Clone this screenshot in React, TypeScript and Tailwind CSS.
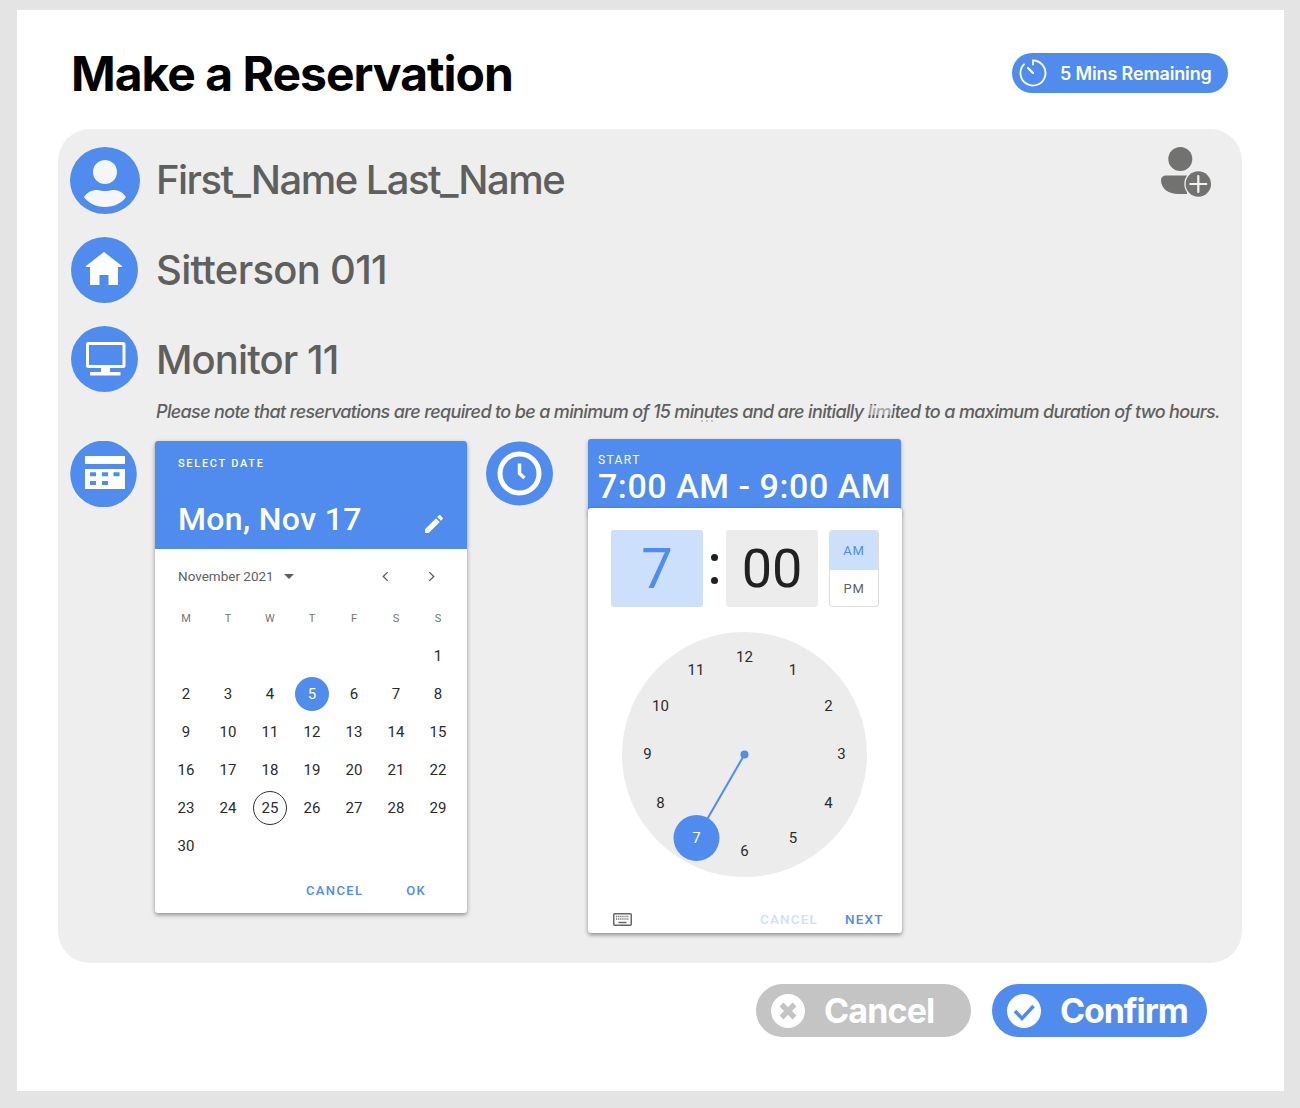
import React from "react";

const BLUE = "#4f8cee";
const dial = [
  ["12", 0], ["1", 30], ["2", 60], ["3", 90], ["4", 120], ["5", 150], ["6", 180], ["8", 240], ["9", 270], ["10", 300], ["11", 330],
] as [string, number][];

const weeks = [
  ["", "", "", "", "", "", "1"],
  ["2", "3", "4", "5", "6", "7", "8"],
  ["9", "10", "11", "12", "13", "14", "15"],
  ["16", "17", "18", "19", "20", "21", "22"],
  ["23", "24", "25", "26", "27", "28", "29"],
  ["30", "", "", "", "", "", ""],
];

function InfoRow({ icon, label, className, textClass }: { icon: React.ReactNode; label: string; className: string; textClass: string }) {
  return (
    <div className={`flex items-center ${className}`}>
      <div className="w-[86px] shrink-0">{icon}</div>
      <div className={`text-[40px] font-[550] leading-none text-[#5f5f5d] ${textClass}`}>{label}</div>
    </div>
  );
}

function Calendar() {
  return (
    <div className="w-[312px] h-[472px] rounded-[3px] bg-white shadow-[0_2px_4px_rgba(0,0,0,0.4)] font-['Roboto',sans-serif] overflow-hidden">
      <div className="h-[108px] bg-[#4f8cee] px-[23px] pt-[16px] text-white">
        <div className="text-[11px] font-medium leading-[14px] tracking-[1.7px]">SELECT DATE</div>
        <div className="mt-[28px] flex items-center justify-between">
          <div className="text-[32px] font-medium leading-[40px] tracking-[0.35px]">Mon, Nov 17</div>
          <svg viewBox="0 0 24 24" className="w-[24px] h-[24px] mr-[-2px] mt-[9px]" fill="#fff">
            <path d="M3 17.25V21h3.75L17.81 9.94l-3.75-3.75L3 17.25zM20.71 7.04c.39-.39.39-1.02 0-1.41l-2.34-2.34c-.39-.39-1.02-.39-1.41 0l-1.83 1.83 3.75 3.75 1.83-1.83z" />
          </svg>
        </div>
      </div>
      <div className="flex h-[54px] items-center pl-[23px] pr-[32px] text-[#5f5f5f]">
        <span className="pt-[1px] text-[13.5px] leading-none">November 2021</span>
        <svg viewBox="0 0 10 5" className="ml-[10px] w-[10px] h-[5px]" fill="#5f5f5f"><path d="M0 0h10L5 5z" /></svg>
        <svg viewBox="0 0 8 12" className="ml-auto w-[7px] h-[11px]" fill="none" stroke="#5f5f5f" strokeWidth="1.6"><path d="M6.5 1 1.5 6l5 5" /></svg>
        <svg viewBox="0 0 8 12" className="ml-[39px] w-[7px] h-[11px]" fill="none" stroke="#5f5f5f" strokeWidth="1.6"><path d="m1.5 1 5 5-5 5" /></svg>
      </div>
      <div className="px-[10px]">
        <div className="mt-[1px] grid grid-cols-[repeat(7,42px)] h-[30px] items-center text-center text-[11px] text-[#757575]">
          {["M", "T", "W", "T", "F", "S", "S"].map((d, i) => <div key={i}>{d}</div>)}
        </div>
        <div className="mt-[3px] grid grid-cols-[repeat(7,42px)] auto-rows-[38px] items-center justify-items-center text-[15px] text-[#2b2b2b]">
          {weeks.flat().map((d, i) => (
            <div
              key={i}
              className={`flex h-[34px] w-[34px] items-center justify-center rounded-full ${d === "5" ? "bg-[#4f8cee] text-white" : d === "25" ? "border border-[#333]" : ""}`}
            >
              {d}
            </div>
          ))}
        </div>
      </div>
      <div className="mt-[16px] flex items-center pl-[151px] text-[13px] font-medium tracking-[1.35px] text-[#4f8cee]">
        <span>CANCEL</span>
        <span className="ml-[43px]">OK</span>
      </div>
    </div>
  );
}

function TimePicker() {
  return (
    <div className="w-[314px] font-['Roboto',sans-serif]">
      <div className="h-[75px] w-[313px] rounded-t-[3px] bg-[#4f8cee] pl-[10px] pt-[14px] text-white shadow-[0_2px_4px_rgba(0,0,0,0.3)]">
        <div className="text-[12px] leading-[14px] tracking-[1.4px]">START</div>
        <div className="mt-[-1px] text-[34px] font-medium leading-[40px] tracking-[0.55px] whitespace-nowrap">7:00 AM - 9:00 AM</div>
      </div>
      <div className="relative mt-[-6px] h-[425px] rounded-[3px] bg-white shadow-[0_2px_4px_rgba(0,0,0,0.4)]">
        <div className="flex items-start pl-[23px] pt-[22px]">
          <div className="flex h-[77px] w-[92px] items-center justify-center rounded-[3px] bg-[#cce0fb] text-[56px] leading-none text-[#4f8cee]">7</div>
          <div className="flex h-[77px] w-[23px] flex-col items-center justify-center gap-[16px]">
            <span className="h-[7px] w-[7px] rounded-full bg-[#212121]" />
            <span className="h-[7px] w-[7px] rounded-full bg-[#212121]" />
          </div>
          <div className="flex h-[77px] w-[92px] items-center justify-center rounded-[3px] bg-[#ececec] text-[54px] leading-none text-[#212121]">00</div>
          <div className="ml-[11px] h-[77px] w-[50px] overflow-hidden rounded-[3px] border border-[#dddddd] text-[13px] tracking-[0.8px]">
            <div className="flex h-[38px] items-center justify-center bg-[#cce0fb] pt-[1px] text-[#4f8cee]">AM</div>
            <div className="flex h-[38px] items-center justify-center border-t border-[#dddddd] text-[#5f5f5f]">PM</div>
          </div>
        </div>
        <div className="relative ml-[34px] mt-[25px] h-[245px] w-[245px] rounded-full bg-[#ececec] text-[15px] text-[#2b2b2b]">
          {dial.map(([n, a]) => (
            <span
              key={n}
              className="absolute flex h-[20px] w-[20px] items-center justify-center"
              style={{
                left: 122.5 + 97 * Math.sin((a * Math.PI) / 180) - 10,
                top: 122.5 - 97 * Math.cos((a * Math.PI) / 180) - 10,
              }}
            >
              {n}
            </span>
          ))}
          <svg viewBox="0 0 245 245" className="absolute inset-0 h-full w-full">
            <line x1="122.5" y1="122.5" x2="74" y2="206.5" stroke="#4f8cee" strokeWidth="2" />
            <circle cx="122.5" cy="122.5" r="4" fill="#4f8cee" />
            <circle cx="74.5" cy="206" r="23" fill="#4f8cee" />
          </svg>
          <span className="absolute left-[64.5px] top-[196px] flex h-[20px] w-[20px] items-center justify-center text-white">7</span>
        </div>
        <div className="mt-[32px] flex h-[20px] items-center pl-[25px] text-[13.5px] font-medium tracking-[1.15px]">
          <svg viewBox="0 0 19 13" className="h-[13px] w-[19px]">
            <rect x="0.75" y="0.75" width="17.5" height="11.5" rx="1" fill="#fff" stroke="#666" strokeWidth="1.5" />
            <path d="M3 3.5h13M3 6h13" stroke="#777" strokeWidth="1.3" strokeDasharray="1.3 0.8" />
            <path d="M5.5 9.5h8" stroke="#666" strokeWidth="1.5" />
          </svg>
          <span className="ml-[128px] text-[#cce0fb]">CANCEL</span>
          <span className="ml-[27px] text-[#4f8cee]">NEXT</span>
        </div>
      </div>
    </div>
  );
}

export default function App() {
  return (
    <div className="h-[1108px] w-[1300px] overflow-hidden bg-[#e4e4e4] pl-[17px] pt-[10px] font-['Inter',sans-serif]">
      <div className="h-[1081px] w-[1267px] bg-white">
        <div className="flex h-[119px] items-center justify-between pl-[55px] pr-[56px] pt-[7px]">
          <h1 className="mt-[2px] ml-[-1px] text-[48px] font-bold leading-none tracking-[-1px] text-black">Make a Reservation</h1>
          <div className="flex h-[40px] w-[216px] items-center rounded-full bg-[#4f8cee] pl-[7px] text-white">
            <svg viewBox="1019 59 28 28" className="h-[28px] w-[28px]" fill="none" stroke="#fff" strokeWidth="1.8" strokeLinecap="round">
              <path d="M1033 60.5a12.5 12.5 0 1 1-9 3.8" />
              <path d="m1033 73-5-5" strokeWidth="2.2" />
              <path d="M1033 60.5v4" />
            </svg>
            <span className="ml-[13px] pt-[1px] text-[18px] font-semibold leading-none tracking-[-0.15px] whitespace-nowrap">5 Mins Remaining</span>
          </div>
        </div>

        <div className="relative ml-[41px] h-[834px] w-[1184px] rounded-[32px] bg-[#eeeeee] pl-[12px] pt-[18px]">
          <svg viewBox="1158 145 56 52" className="absolute left-[1100px] top-[16px] h-[52px] w-[56px]">
            <circle cx="1180.3" cy="159" r="12" fill="#727270" />
            <path d="M1161 180c0-3 2-4.5 5-4.5h21v18.5h-9c-9 0-17-5-17-14z" fill="#727270" />
            <circle cx="1198.3" cy="184" r="14" fill="#eeeeee" />
            <circle cx="1198.3" cy="184" r="12.7" fill="#727270" />
            <path d="M1198.3 176v16M1190.3 184h16" stroke="#f3f3f3" strokeWidth="2.2" strokeLinecap="round" />
          </svg>

          <InfoRow
            className="h-[67px]"
            textClass="pb-[2px] tracking-[-1.55px]"
            label="First_Name Last_Name"
            icon={
              <svg viewBox="70 147 70 67" className="h-[67px] w-[70px]">
                <ellipse cx="105" cy="180.5" rx="35" ry="33.5" fill={BLUE} />
                <circle cx="105" cy="172" r="12" fill="#f4f6fa" />
                <path d="M84 197c3-5 9-7.500 14-7 4 1.300 10 1.300 14 0 5-.5 11 2 14 7-4 6-12 10-21 10s-17-4-21-10z" fill="#f4f6fa" />
              </svg>
            }
          />
          <InfoRow
            className="mt-[23px] h-[66px]"
            textClass="tracking-[-0.7px]"
            label="Sitterson 011"
            icon={
              <svg viewBox="71 237 67 66" className="ml-[1px] h-[66px] w-[67px]">
                <ellipse cx="104.500" cy="270" rx="33.500" ry="33" fill={BLUE} />
                <path d="M104 252l18 14v1h-4v18h-9.500v-10h-9v10H90v-18h-4v-1z" fill="#fff" />
              </svg>
            }
          />
          <InfoRow
            className="mt-[23px] h-[66px]"
            textClass="pt-[2px] tracking-[-0.9px]"
            label="Monitor 11"
            icon={
              <svg viewBox="71 326 67 66" className="ml-[1px] h-[66px] w-[67px]">
                <ellipse cx="104.500" cy="359" rx="33.500" ry="33" fill={BLUE} />
                <rect x="87.500" y="343.500" width="36.500" height="23" rx="1" fill="none" stroke="#fff" strokeWidth="3" />
                <path d="M101 368h9v4h10.500v3.500H90V372h11z" fill="#fff" />
              </svg>
            }
          />

          <div className="relative mt-[8px] h-[24px] pl-[86px] text-[18px] font-medium italic leading-[24px] tracking-[-0.645px] text-[#5f5f5d] whitespace-nowrap">
            Please note that reservations are required to be a minimum of 15 minutes and are initially limited to a maximum duration of two hours.
            <span className="absolute left-[631px] top-[20px] h-[2px] w-[2px] rounded-full bg-[#b5b5b5]" />
            <span className="absolute left-[636px] top-[20px] h-[2px] w-[2px] rounded-full bg-[#b5b5b5]" />
            <span className="absolute left-[641px] top-[20px] h-[2px] w-[2px] rounded-full bg-[#b5b5b5]" />
            <span className="absolute left-[795px] top-[5px] h-[10px] w-[28px] bg-[#eeeeee]/50" />
          </div>

          <div className="mt-[15px] flex items-start">
            <svg viewBox="70 441 67 66" className="mt-[2px] h-[66px] w-[67px] shrink-0">
              <circle cx="103.500" cy="474" r="33.300" fill={BLUE} />
              <rect x="85" y="456" width="40" height="8" fill="#fff" />
              <path d="M85 469h40v20H85zM90 472.300v4h6v-4zM102 472.300v4h6v-4zM113.500 472.300v4h6v-4zM90 481v4h6v-4zM102 481v4h6v-4z" fill="#fff" fillRule="evenodd" />
            </svg>
            <div className="ml-[18px] mt-[2px]"><Calendar /></div>
            <svg viewBox="486 441 67 66" className="ml-[19px] mt-[2px] h-[66px] w-[67px] shrink-0">
              <ellipse cx="519.500" cy="473.500" rx="33.500" ry="32" fill={BLUE} />
              <circle cx="519.500" cy="473.500" r="19.500" fill="none" stroke="#fff" strokeWidth="5" />
              <path d="M519.500 463.500v10l5 4.500" fill="none" stroke="#fff" strokeWidth="3.500" />
            </svg>
            <div className="ml-[35px]"><TimePicker /></div>
          </div>
        </div>

        <div className="flex pl-[739px] pt-[21px]">
          <div className="flex h-[53px] w-[215px] items-center rounded-full bg-[#c4c4c4] pl-[15px] text-white">
            <svg viewBox="771 993 34 34" className="h-[34px] w-[34px]">
              <circle cx="788" cy="1010" r="17" fill="#fff" />
              <path d="M781.500 1003.500 794.500 1016.500M794.500 1003.500 781.500 1016.500" stroke="#c4c4c4" strokeWidth="5.500" />
            </svg>
            <span className="ml-[19px] text-[34px] font-bold leading-none tracking-[-0.85px]">Cancel</span>
          </div>
          <div className="ml-[21px] flex h-[53px] w-[215px] items-center rounded-full bg-[#4f8cee] pl-[15px] text-white">
            <svg viewBox="1007 993 34 34" className="h-[34px] w-[34px]">
              <circle cx="1024" cy="1010" r="17" fill="#fff" />
              <path d="M1015 1010l7 7.500 11.500-12.500" fill="none" stroke={BLUE} strokeWidth="3.500" />
            </svg>
            <span className="ml-[19px] text-[34px] font-bold leading-none tracking-[-1.1px]">Confirm</span>
          </div>
        </div>
      </div>
    </div>
  );
}
